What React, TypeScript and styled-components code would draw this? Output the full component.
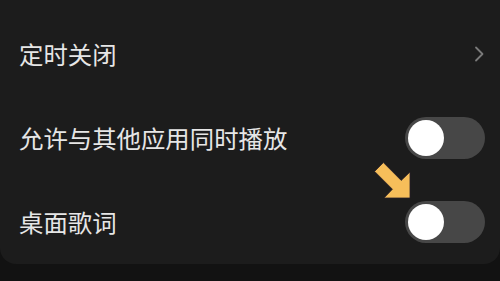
import React from "react";
import styled, { createGlobalStyle } from "styled-components";

const Global = createGlobalStyle`
  html, body { margin: 0; padding: 0; background: #121212; }
  body { width: 500px; height: 281px; overflow: hidden; }
`;

const Page = styled.div`
  width: 500px;
  height: 281px;
  background: #121212;
  font-family: "Noto Sans CJK SC", "Noto Sans", sans-serif;
`;

const Card = styled.div`
  position: relative;
  background: #1c1c1c;
  border-radius: 0 0 16px 16px;
  padding: 12px 15px 0 19px;
  display: flex;
  flex-direction: column;
`;

const Row = styled.div`
  height: 84px;
  display: flex;
  align-items: center;
  justify-content: space-between;
`;

const Label = styled.span`
  color: #e6e6e6;
  font-size: 24.4px;
  line-height: 1;
`;

const Chevron = styled.svg`
  width: 12px;
  height: 18px;
  margin-right: 0;
`;

const Track = styled.div<{ $on?: boolean }>`
  width: 80px;
  height: 42px;
  border-radius: 21px;
  background: ${(p) => (p.$on ? "#e84b4b" : "#474747")};
  display: flex;
  align-items: center;
  padding: 0 3px;
  box-sizing: border-box;
  justify-content: ${(p) => (p.$on ? "flex-end" : "flex-start")};
`;

const Knob = styled.div`
  width: 36px;
  height: 36px;
  border-radius: 50%;
  background: #ffffff;
`;

const Pointer = styled.svg`
  position: absolute;
  left: 369px;
  top: 157px;
  width: 46px;
  height: 46px;
`;

const Toggle = ({ on }: { on?: boolean }) => (
  <Track $on={on}>
    <Knob />
  </Track>
);

export default function App() {
  return (
    <Page>
      <Global />
      <Card>
        <Row>
          <Label>定时关闭</Label>
          <Chevron viewBox="0 0 12 18">
            <path d="M3 2.5 L9.5 9 L3 15.5" fill="none" stroke="#7a7a7a" strokeWidth="1.8" strokeLinecap="round" strokeLinejoin="round" />
          </Chevron>
        </Row>
        <Row>
          <Label>允许与其他应用同时播放</Label>
          <Toggle />
        </Row>
        <Row>
          <Label>桌面歌词</Label>
          <Toggle />
        </Row>
        <Pointer viewBox="0 0 46 46">
          <polygon
            points="14.4,5.6 32.2,23.4 41,15 41,41 15,41 23.4,32.2 5.6,14.4"
            fill="#f6be5a"
            stroke="#2a1f2a"
            strokeWidth="0.8"
            strokeLinejoin="miter"
          />
        </Pointer>
      </Card>
    </Page>
  );
}
